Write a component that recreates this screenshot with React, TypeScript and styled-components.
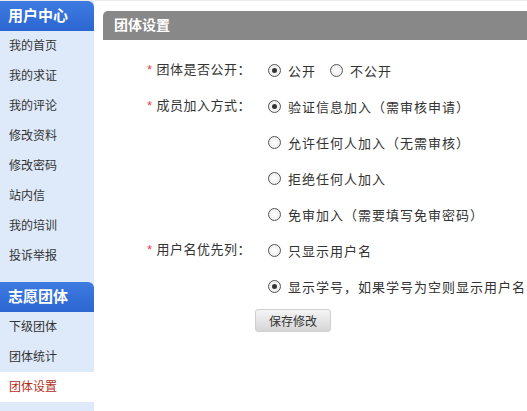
import React from 'react';
import styled, { createGlobalStyle } from 'styled-components';

const Global = createGlobalStyle`
  html, body {
    margin: 0;
    padding: 0;
    background: #fff;
  }
  body {
    font-family: 'Liberation Sans', 'Noto Sans CJK SC', sans-serif;
    color: #333;
  }
`;

type Group = { title: string; items: string[] };

const groups: Group[] = [
  {
    title: '用户中心',
    items: ['我的首页', '我的求证', '我的评论', '修改资料', '修改密码', '站内信', '我的培训', '投诉举报'],
  },
  { title: '志愿团体', items: ['下级团体', '团体统计', '团体设置'] },
];

const ACTIVE = '团体设置';

type Field = { label: string; options: { text: string; checked?: boolean }[]; inline?: boolean };

const fields: Field[] = [
  {
    label: '团体是否公开：',
    inline: true,
    options: [{ text: '公开', checked: true }, { text: '不公开' }],
  },
  {
    label: '成员加入方式：',
    options: [
      { text: '验证信息加入（需审核申请）', checked: true },
      { text: '允许任何人加入（无需审核）' },
      { text: '拒绝任何人加入' },
      { text: '免审加入（需要填写免审密码）' },
    ],
  },
  {
    label: '用户名优先列：',
    options: [{ text: '只显示用户名' }, { text: '显示学号，如果学号为空则显示用户名', checked: true }],
  },
];

export default function App() {
  return (
    <>
      <Global />
      <Page>
        <Sidebar>
          {groups.map((g) => (
            <SideGroup key={g.title}>
              <SideTitle>{g.title}</SideTitle>
              {g.items.map((it) => (
                <SideItem key={it} $active={it === ACTIVE}>
                  {it}
                </SideItem>
              ))}
            </SideGroup>
          ))}
        </Sidebar>
        <Main>
          <Heading>团体设置</Heading>
          <Form>
            {fields.map((f) => (
              <FieldRow key={f.label}>
                <Label>
                  <Star>*</Star>
                  {f.label}
                </Label>
                <Options $inline={f.inline}>
                  {f.options.map((o) => (
                    <Option key={o.text}>
                      <Radio $checked={o.checked} />
                      {o.text}
                    </Option>
                  ))}
                </Options>
              </FieldRow>
            ))}
            <Actions>
              <SaveButton type="button">保存修改</SaveButton>
            </Actions>
          </Form>
        </Main>
      </Page>
    </>
  );
}

const Page = styled.div`
  display: flex;
  width: 527px;
  height: 411px;
  overflow: hidden;
  border-top: 1px solid #ececec;
  box-sizing: border-box;
`;

const Sidebar = styled.aside`
  width: 94px;
  flex-shrink: 0;
  background: #deeafa;
  display: flex;
  flex-direction: column;
  gap: 11px;
`;

const SideGroup = styled.div`
  display: flex;
  flex-direction: column;
`;

const SideTitle = styled.div`
  height: 30px;
  line-height: 30px;
  padding-left: 8px;
  background: linear-gradient(#3d7be0, #2c66d2);
  border-top-right-radius: 6px;
  color: #fff;
  font-size: 15px;
  font-weight: bold;
`;

const SideItem = styled.div<{ $active?: boolean }>`
  height: 30px;
  line-height: 30px;
  padding-left: 9px;
  font-size: 12px;
  color: ${(p) => (p.$active ? '#b3301a' : '#333')};
  background: ${(p) => (p.$active ? '#fff' : 'transparent')};
`;

const Main = styled.main`
  flex: 1;
  padding: 10px 0 0 9px;
  min-width: 0;
`;

const Heading = styled.h2`
  margin: 0;
  height: 29px;
  line-height: 29px;
  padding-left: 11px;
  background: #888;
  border-top-left-radius: 5px;
  color: #fff;
  font-size: 14px;
  font-weight: bold;
`;

const Form = styled.form`
  padding: 12px 0 0 44px;
  font-size: 13px;
  letter-spacing: 1px;
`;

const FieldRow = styled.div`
  display: flex;
  align-items: flex-start;
`;

const Label = styled.div`
  width: 121px;
  flex-shrink: 0;
  height: 36px;
  line-height: 36px;
  white-space: nowrap;
  letter-spacing: 0.5px;
`;

const Star = styled.span`
  color: #e8424f;
  margin-right: 4px;
`;

const Options = styled.div<{ $inline?: boolean }>`
  display: flex;
  flex-direction: ${(p) => (p.$inline ? 'row' : 'column')};
  gap: ${(p) => (p.$inline ? '14px' : '0')};
`;

const Option = styled.label`
  display: flex;
  align-items: center;
  height: 36px;
  gap: 7px;
  white-space: nowrap;
`;

const Radio = styled.span<{ $checked?: boolean }>`
  width: 11px;
  height: 11px;
  border-radius: 50%;
  border: 1px solid #555;
  background: radial-gradient(circle, #fff 0%, #e6e6e6 100%);
  position: relative;
  flex-shrink: 0;
  &::after {
    content: '';
    display: ${(p) => (p.$checked ? 'block' : 'none')};
    position: absolute;
    left: 3px;
    top: 3px;
    width: 5px;
    height: 5px;
    border-radius: 50%;
    background: #333;
  }
`;

const Actions = styled.div`
  padding: 5px 0 0 108px;
`;

const SaveButton = styled.button`
  width: 76px;
  height: 23px;
  border: 1px solid #cfcfcf;
  border-radius: 3px;
  background: linear-gradient(#f4f4f4, #d6d6d6);
  font-family: inherit;
  font-size: 12px;
  color: #333;
  padding: 0;
  cursor: pointer;
`;
